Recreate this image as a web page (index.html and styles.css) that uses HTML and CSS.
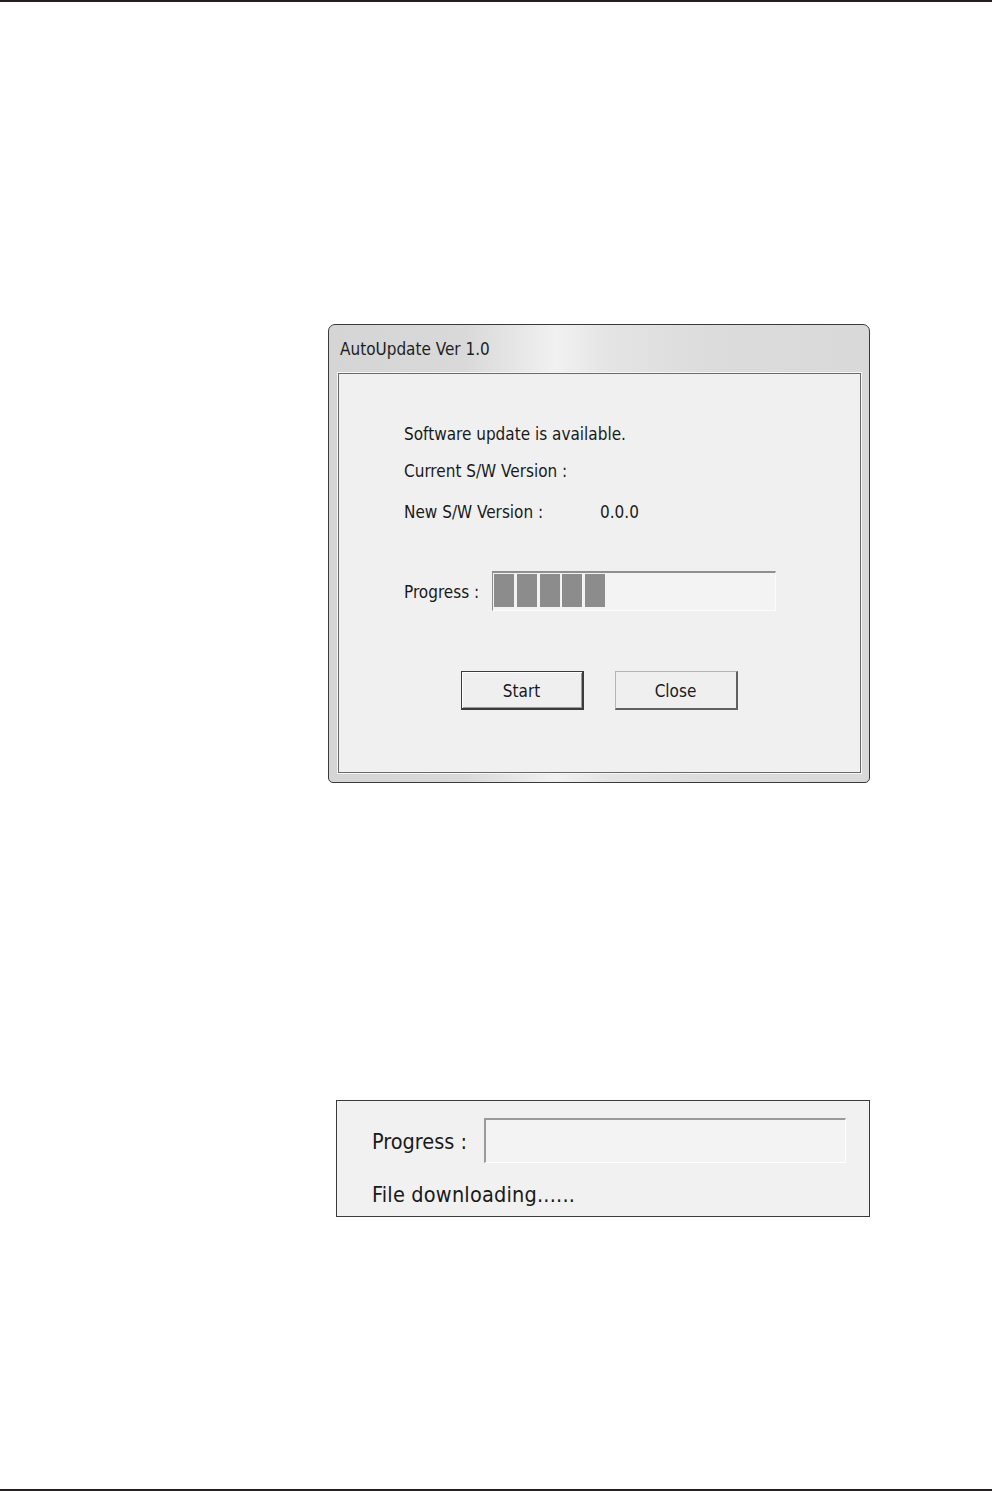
FILE: index.html
```html
<!DOCTYPE html>
<html lang="en">
<head>
<meta charset="utf-8">
<title>AutoUpdate</title>
<link rel="stylesheet" href="styles.css">
</head>
<body>
<div class="page">
  <div class="rule rule-top"></div>

  <div class="fig fig-dialog">
    <div class="window">
      <div class="titlebar">AutoUpdate Ver 1.0</div>
      <div class="client">
        <div class="line line-1">Software update is available.</div>
        <div class="line line-2">Current S/W Version :</div>
        <div class="line line-3"><span class="label">New S/W Version :</span><span>0.0.0</span></div>
        <div class="progress-row">
          <span class="plabel">Progress :</span>
          <div class="pbox">
            <span class="block"></span><span class="block"></span><span class="block"></span><span class="block"></span><span class="block"></span>
          </div>
        </div>
        <div class="buttons">
          <div class="btn btn-default">Start</div>
          <div class="btn">Close</div>
        </div>
      </div>
    </div>
  </div>

  <div class="fig fig-panel">
    <div class="panel">
      <div class="panel-row">
        <span class="panel-label">Progress :</span>
        <div class="panel-box"></div>
      </div>
      <div class="panel-text">File downloading......</div>
    </div>
  </div>

  <div class="rule rule-bottom"></div>
</div>
</body>
</html>
```

FILE: styles.css
```css
html, body {
  margin: 0;
  padding: 0;
  background: #ffffff;
}

.page {
  height: 1491px;
  display: flex;
  flex-direction: column;
  font-family: "DejaVu Sans", "Liberation Sans", sans-serif;
  font-stretch: condensed;
  color: #1a1a1a;
}

.rule {
  height: 2px;
  background: #231f20;
  flex: none;
}

.rule-bottom {
  margin-top: auto;
}

.fig-dialog {
  margin-top: 322px;
  margin-left: 328px;
}

.window {
  box-sizing: border-box;
  width: 542px;
  height: 459px;
  border: 1px solid #3a3a3a;
  border-radius: 7px 7px 5px 5px;
  background: linear-gradient(90deg, #d5d5d5 0%, #d9d9d9 25%, #e8e8e8 36%, #f1f1f1 42%, #e4e4e4 52%, #dcdcdc 70%, #d9d9d9 100%);
  display: flex;
  flex-direction: column;
}

.titlebar {
  height: 48px;
  padding-left: 11px;
  font-size: 17px;
  line-height: 48px;
  color: #1e1e1e;
}

.client {
  box-sizing: border-box;
  margin: 0 8px 0 9px;
  height: 400px;
  border: 1px solid #6a6a6a;
  box-shadow: 0 0 0 1px #f6f6f6;
  background: #f0f0f0;
  padding: 49px 0 0 65px;
  font-size: 17px;
}

.line {
  line-height: 22px;
  height: 22px;
}

.line-2 { margin-top: 15px; }
.line-3 { margin-top: 19px; display: flex; }
.line-3 .label { width: 196px; flex: none; }

.progress-row {
  margin-top: 48px;
  display: flex;
  align-items: center;
}

.plabel {
  width: 88px;
  flex: none;
  padding-top: 2px;
}

.pbox {
  box-sizing: border-box;
  width: 284px;
  height: 40px;
  border-top: 2px solid #8f8f8f;
  border-left: 1px solid #8f8f8f;
  border-right: 1px solid #fbfbfb;
  border-bottom: 1px solid #fbfbfb;
  background: #f3f3f3;
  padding: 1px 0 0 1px;
  display: flex;
  gap: 2.75px;
}

.block {
  width: 20px;
  height: 33px;
  background: #8c8c8c;
}

.buttons {
  margin: 60px 0 0 -65px;
  display: flex;
  justify-content: center;
  gap: 31px;
  padding-right: 1px;
}

.btn {
  box-sizing: border-box;
  width: 123px;
  height: 39px;
  display: flex;
  align-items: center;
  justify-content: center;
  padding-top: 1px;
  background: #efefef;
  border-top: 1px solid #b4b4b4;
  border-left: 1px solid #b4b4b4;
  border-right: 2px solid #606060;
  border-bottom: 2px solid #606060;
  font-size: 17px;
}

.btn-default {
  border: 1px solid #3c3c3c;
  border-right-width: 2px;
  border-bottom-width: 2px;
  box-shadow: inset 1px 1px 0 #ffffff, inset -1px -1px 0 #9a9a9a;
}

.fig-panel {
  margin-top: 317px;
  margin-left: 336px;
}

.panel {
  box-sizing: border-box;
  width: 534px;
  height: 117px;
  border: 1px solid #3a3a3a;
  background: #f1f1f1;
  padding: 17px 0 0 35px;
  font-size: 21.5px;
}

.panel-row {
  display: flex;
  align-items: center;
}

.panel-label {
  width: 112px;
  flex: none;
  padding-top: 2px;
}

.panel-box {
  box-sizing: border-box;
  width: 362px;
  height: 45px;
  border-top: 2px solid #9a9a9a;
  border-left: 2px solid #9a9a9a;
  border-right: 1px solid #ffffff;
  border-bottom: 1px solid #ffffff;
  background: #f3f3f3;
}

.panel-text {
  margin-top: 20px;
  line-height: 24px;
  letter-spacing: 0.2px;
}
```
